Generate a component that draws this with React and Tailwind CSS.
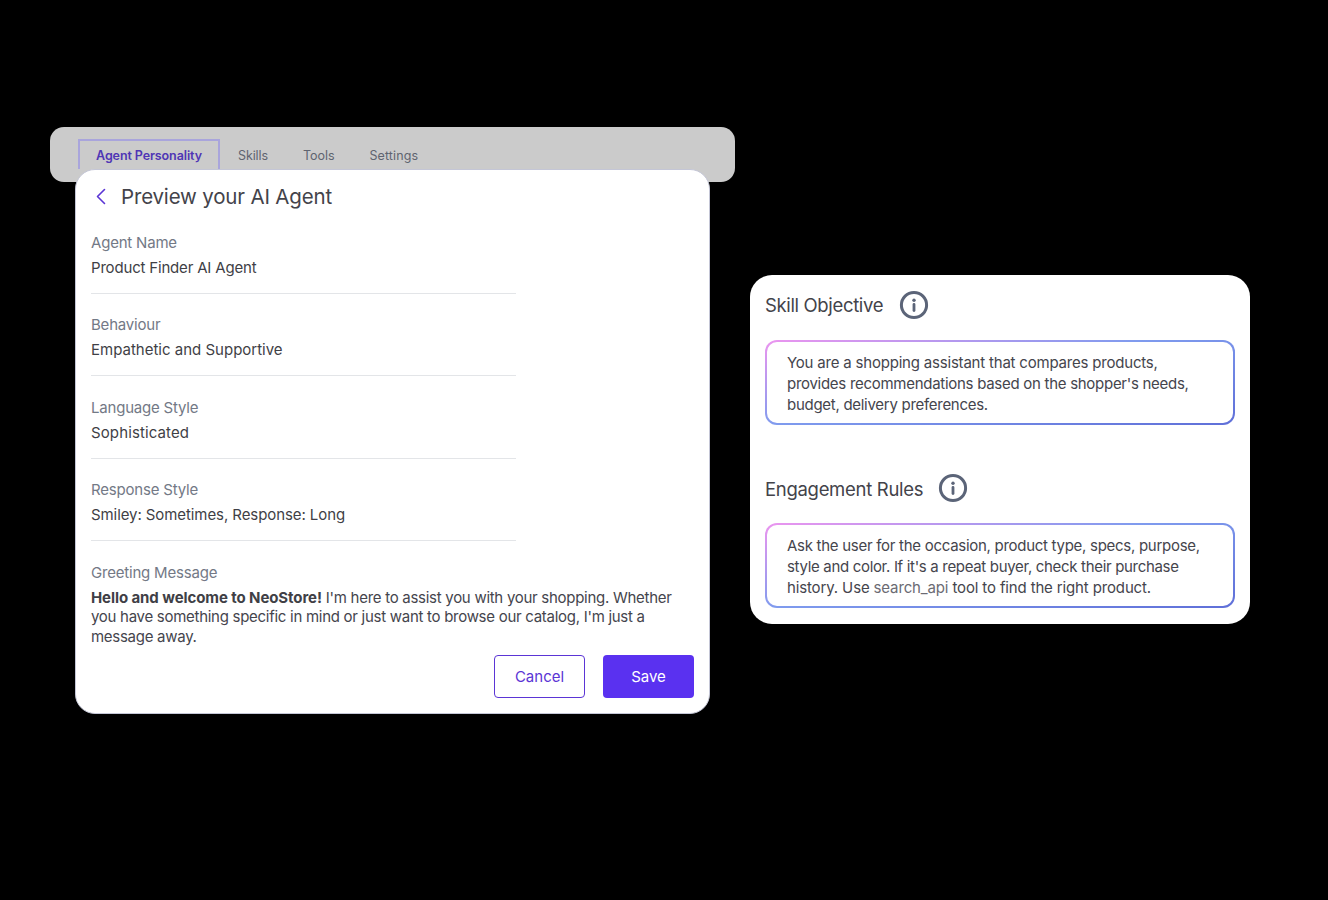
import React from "react";

function Info() {
  return (
    <svg width="30" height="30" viewBox="0 0 30 30" fill="none" className="shrink-0">
      <circle cx="15" cy="15" r="12.6" stroke="#5b6478" strokeWidth="3" />
      <circle cx="15" cy="10.2" r="1.7" fill="#5b6478" />
      <path d="M15 14.4v6.2" stroke="#5b6478" strokeWidth="2.8" strokeLinecap="round" />
    </svg>
  );
}

function Field({ label, value, valueClass }) {
  return (
    <div className="w-[425px] h-[61px] mb-[21.5px] border-b border-[#e3e5e8]">
      <div className="text-[15px] leading-[20px] text-[#737986] tracking-[-0.2px]">{label}</div>
      <div className={`mt-[5px] text-[15px] leading-[20px] text-[#3f3f46] ${valueClass}`}>{value}</div>
    </div>
  );
}

function GradientBox({ children }) {
  return (
    <div className="rounded-[12px] p-[2px] bg-[linear-gradient(167deg,#ec95ef_0%,#7f9bee_45%,#5f6fd8_100%)]">
      <div className="h-[81px] rounded-[10px] bg-white px-[20px] pt-[10px] text-[15px] leading-[21px] text-[#45454d] tracking-[-0.28px]">
        {children}
      </div>
    </div>
  );
}

export default function App() {
  return (
    <div className="w-[1328px] h-[900px] bg-black flex items-start font-['Inter',sans-serif] overflow-hidden">
      <div className="ml-[50px] mt-[127px] w-[685px]">
        <div className="h-[55px] rounded-[14px] bg-[#cbcbcb] pl-[28px] pt-[12px] flex items-start text-[12.5px] text-[#5f6470]">
          <div className="h-[30px] w-[142px] border-2 border-b-0 border-[#a9a5dc] flex items-center justify-center font-semibold text-[#4f35b5] pt-[3px] tracking-[-0.1px]">
            Agent Personality
          </div>
          <div className="pl-[18px] pt-[7px] leading-[20px] tracking-[-0.1px]">Skills</div>
          <div className="pl-[35px] pt-[7px] leading-[20px] tracking-[-0.05px]">Tools</div>
          <div className="pl-[35px] pt-[7px] leading-[20px] tracking-[0.1px]">Settings</div>
        </div>
        <div className="relative ml-[25px] -mt-[13px] w-[635px] h-[545px] rounded-[20px] bg-white border border-[#c4c6d6] px-[15px]">
          <div className="flex items-center h-[54px]">
            <svg width="20" height="20" viewBox="0 0 20 20" fill="none">
              <path d="M13.5 3 L6.5 10 L13.5 17" transform="translate(0 -0.5)" stroke="#5b35d5" strokeWidth="1.6" strokeLinecap="round" strokeLinejoin="round" />
            </svg>
            <div className="ml-[10px] text-[20.5px] leading-[28px] text-[#43434a] tracking-[-0.17px]">Preview your AI Agent</div>
          </div>
          <div className="mt-[8.5px]">
            <Field label="Agent Name" value="Product Finder AI Agent" valueClass="tracking-[-0.18px]" />
            <Field label="Behaviour" value="Empathetic and Supportive" valueClass="tracking-[0px]" />
            <Field label="Language Style" value="Sophisticated" valueClass="tracking-[0.12px]" />
            <Field label="Response Style" value="Smiley: Sometimes, Response: Long" valueClass="tracking-[-0.08px]" />
          </div>
          <div className="text-[15px] leading-[20px] text-[#737986] tracking-[-0.2px]">Greeting Message</div>
          <div className="mt-[5px] w-[600px] text-[15px] leading-[19.5px] text-[#45454d] tracking-[-0.28px]">
            <span className="font-bold text-[#3f3f46] tracking-[-0.09px]">Hello and welcome to NeoStore!</span> I'm here to assist you with your shopping. Whether you have something specific in mind or just want to browse our catalog, I'm just a message away.
          </div>
          <div className="mt-[9px] flex justify-end gap-[18px]">
            <div className="w-[91px] h-[43px] rounded-[4px] border border-[#5b35d5] text-[#5b35d5] flex items-center justify-center text-[15px] pt-[2px]">Cancel</div>
            <div className="w-[91px] h-[43px] rounded-[4px] bg-[#5a31f0] text-white flex items-center justify-center text-[15px] pt-[2px]">Save</div>
          </div>
        </div>
      </div>
      <div className="ml-[15px] mt-[275px] w-[500px] h-[349px] rounded-[22px] bg-white px-[15px]">
        <div className="flex items-center h-[60px]">
          <div className="text-[18.5px] leading-[26px] text-[#43434a] tracking-[-0.35px]">Skill Objective</div>
          <div className="ml-[16px]"><Info /></div>
        </div>
        <div className="mt-[5px]">
          <GradientBox>
            <span className="tracking-[-0.2px]">You are a shopping assistant that compares products,</span><br />
            provides recommendations based on the shopper's needs,<br />
            budget, delivery preferences.
          </GradientBox>
        </div>
        <div className="mt-[33px] flex items-center h-[60px] mb-[5px]">
          <div className="pt-[2px] text-[18.5px] leading-[26px] text-[#43434a] tracking-[-0.3px]">Engagement Rules</div>
          <div className="ml-[15px]"><Info /></div>
        </div>
        <GradientBox>
          Ask the user for the occasion, product type, specs, purpose,<br />
          <span className="tracking-[-0.32px]">style and color. If it's a repeat buyer, check their purchase</span><br />
          <span className="tracking-[-0.14px]">history. Use <span className="text-[#6b6b73]">search_api</span> tool to find the right product.</span>
        </GradientBox>
      </div>
    </div>
  );
}
